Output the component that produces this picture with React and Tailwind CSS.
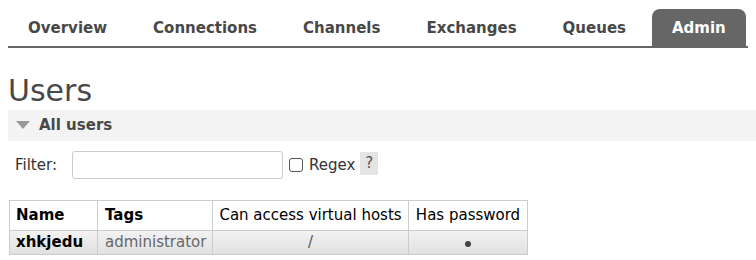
import React from "react";

const tabs = ["Overview", "Connections", "Channels", "Exchanges", "Queues", "Admin"];

export default function App() {
    return (
        <div className="w-[756px] h-[260px] bg-white text-[#484848]" style={{ fontFamily: '"DejaVu Sans", Verdana, sans-serif' }}>
            {/* Top nav tabs */}
            <div className="pt-[9px] px-[8px]">
                <ul className="flex gap-[6px] border-b-2 border-[#666] w-[740px]">
                    {tabs.map((t) => (
                        <li
                            key={t}
                            className={
                                "h-[37px] flex items-center px-[20px] pt-[2px] text-[15px] font-bold rounded-t-[8px] " +
                                (t === "Admin" ? "bg-[#666] text-white" : "text-[#484848]")
                            }
                        >
                            {t}
                        </li>
                    ))}
                </ul>
            </div>

            {/* Page title */}
            <h1 className="ml-[8px] mt-[24px] text-[30px] leading-[38px] font-normal text-[#484848]">Users</h1>

            {/* Section header */}
            <div className="ml-[8px] h-[31px] bg-[#f4f4f4] flex items-center pl-[8px] gap-[9px]">
                <svg width="14" height="9" viewBox="0 0 14 9">
                    <path d="M0 0 H14 L7 8 Z" fill="#999" />
                </svg>
                <span className="text-[15px] font-bold text-[#484848]">All users</span>
            </div>

            {/* Filter row */}
            <div className="flex items-center ml-[15px] mt-[10px] text-[15px] text-[#333]">
                <span className="w-[57px]">Filter:</span>
                <input className="w-[211px] h-[28px] border border-[#ccc] rounded-[3px]" />
                <span className="ml-[6px] w-[14px] h-[14px] border border-[#555] rounded-[3px] bg-white" />
                <span className="ml-[6px]">Regex</span>
                <span className="ml-[5px] w-[18px] h-[23px] bg-[#e4e4e4] flex items-center justify-center text-[#555] -mt-[4px]">?</span>
            </div>

            {/* Users table */}
            <table className="ml-[9px] mt-[21px] border-collapse text-[15px] table-fixed">
                <thead>
                    <tr className="h-[30px]">
                        <th className="w-[88px] border border-[#ccc] text-left pl-[6px] font-bold text-black">Name</th>
                        <th className="w-[115px] border border-[#ccc] text-left pl-[7px] font-bold text-black">Tags</th>
                        <th className="w-[196px] border border-[#ccc] text-center font-normal text-black whitespace-nowrap">Can access virtual hosts</th>
                        <th className="w-[119px] border border-[#ccc] text-center font-normal text-black whitespace-nowrap">Has password</th>
                    </tr>
                </thead>
                <tbody>
                    <tr className="h-[24px] bg-gradient-to-b from-[#f2f2f2] to-[#e0e0e0]">
                        <td className="border border-[#ccc] pl-[6px] font-bold text-black">xhkjedu</td>
                        <td className="border border-[#ccc] pl-[7px] text-[#666]">administrator</td>
                        <td className="border border-[#ccc] text-center text-[#555]">/</td>
                        <td className="border border-[#ccc]">
                            <div className="mx-auto w-[6px] h-[6px] rounded-full bg-[#444] mt-[2px]" />
                        </td>
                    </tr>
                </tbody>
            </table>
        </div>
    );
}
